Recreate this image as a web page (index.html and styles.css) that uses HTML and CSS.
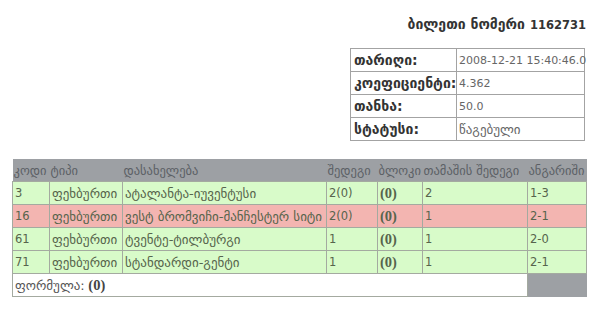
FILE: index.html
```html
<!DOCTYPE html>
<html>
<head>
<meta charset="utf-8">
<link rel="stylesheet" href="styles.css">
</head>
<body>
<div class="page">
  <h1 class="title"><span class="ka">ბილეთი ნომერი</span> 1162731</h1>
  <div class="info-wrap">
    <table class="info">
      <colgroup><col class="i1"><col class="i2"></colgroup>
      <tr><th>თარიღი:</th><td>2008-12-21 15:40:46.0</td></tr>
      <tr><th>კოეფიციენტი:</th><td>4.362</td></tr>
      <tr><th>თანხა:</th><td>50.0</td></tr>
      <tr><th>სტატუსი:</th><td class="ka">წაგებული</td></tr>
    </table>
  </div>
  <table class="bets">
    <colgroup>
      <col class="c1"><col class="c2"><col class="c3"><col class="c4"><col class="c5"><col class="c6"><col class="c7">
    </colgroup>
    <tr class="head">
      <th>კოდი</th><th>ტიპი</th><th>დასახელება</th><th>შედეგი</th><th>ბლოკი</th><th>თამაშის შედეგი</th><th>ანგარიში</th>
    </tr>
    <tr class="win">
      <td>3</td><td class="ka">ფეხბურთი</td><td class="ka">ატალანტა-იუვენტუსი</td><td>2(0)</td><td class="blk">(0)</td><td>2</td><td>1-3</td>
    </tr>
    <tr class="lose">
      <td>16</td><td class="ka">ფეხბურთი</td><td class="ka">ვესტ ბრომვიჩი-მანჩესტერ სიტი</td><td>2(0)</td><td class="blk">(0)</td><td>1</td><td>2-1</td>
    </tr>
    <tr class="win">
      <td>61</td><td class="ka">ფეხბურთი</td><td class="ka">ტვენტე-ტილბურგი</td><td>1</td><td class="blk">(0)</td><td>1</td><td>2-0</td>
    </tr>
    <tr class="win">
      <td>71</td><td class="ka">ფეხბურთი</td><td class="ka">სტანდარდი-გენტი</td><td>1</td><td class="blk">(0)</td><td>1</td><td>2-1</td>
    </tr>
    <tr class="formula">
      <td colspan="6"><span class="ka">ფორმულა:</span> <b class="blk">(0)</b></td><td class="filler"></td>
    </tr>
  </table>
</div>
</body>
</html>
```

FILE: styles.css
```css
html, body {
  margin: 0;
  padding: 0;
  background: #ffffff;
}
body {
  font-family: "DejaVu Sans", Verdana, sans-serif;
  font-size: 11.5px;
  color: #555;
}
.page {
  padding: 15px 7px 0 12px;
  width: 574px;
}
.ka {
  font-size: 13px;
}
.title {
  margin: 0;
  text-align: right;
  font-size: 11.5px;
  font-weight: bold;
  color: #333;
  line-height: 18px;
  padding-right: 0;
}
.title .ka {
  font-size: 14px;
  margin-right: 1px;
}
.info-wrap {
  display: flex;
  justify-content: flex-end;
  margin-top: 14px;
  padding-right: 1px;
}
.info {
  border-collapse: collapse;
  width: 234px;
  table-layout: fixed;
}
.i1 { width: 106px; }
.i2 { width: 128px; }
.info th, .info td {
  border: 1px solid #a3a3a3;
  height: 22px;
  padding: 0 3px;
  text-align: left;
  white-space: nowrap;
}
.info th {
  font-weight: bold;
  font-size: 14px;
  color: #333;
  padding: 0 0 0 3px;
}
.info td {
  color: #666;
  font-size: 11px;
  padding-left: 2px;
  padding-right: 0;
}
.info td.ka {
  font-size: 13px;
}
.bets {
  margin-top: 18px;
  border-collapse: collapse;
  width: 574px;
  table-layout: fixed;
}
.c1 { width: 37px; }
.c2 { width: 73px; }
.c3 { width: 204px; }
.c4 { width: 51px; }
.c5 { width: 45px; }
.c6 { width: 105px; }
.c7 { width: 59px; }
.bets th, .bets td {
  padding: 0 2px;
  text-align: left;
  white-space: nowrap;
}
.bets td {
  overflow: hidden;
}
.bets .head th {
  background: #9da0a4;
  color: #5b5f64;
  font-weight: normal;
  font-size: 12.5px;
  height: 22px;
  padding: 0 1px;
  border: none;
}
.bets td {
  height: 22px;
  border: 1px solid #a4aaa0;
  color: #56644c;
}
.bets td.ka {
  font-size: 13px;
}
.bets .win td { background: #d8fbc9; }
.bets .lose td { background: #f3b5b1; }
.blk {
  font-family: "Liberation Serif", "Times New Roman", serif;
  font-weight: bold;
  font-size: 14.5px;
  color: #4d5c40;
}
.bets .formula td {
  background: #ffffff;
  color: #555;
}
.bets .formula .blk { color: #444; }
.bets .formula td.filler {
  background: #9da0a4;
  border: none;
}
```
